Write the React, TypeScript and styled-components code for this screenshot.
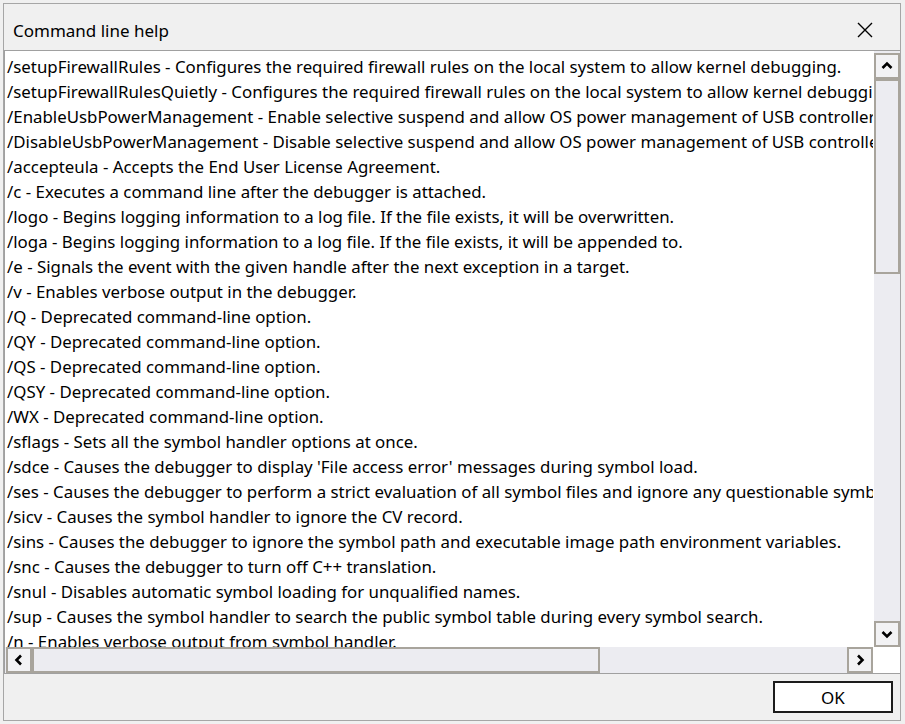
import React from 'react'
import styled, { createGlobalStyle } from 'styled-components'

const GlobalStyle = createGlobalStyle`
  html, body {
    margin: 0;
    padding: 0;
    background: #f0f0f0;
  }
  body {
    font-family: 'Noto Sans', 'Open Sans', sans-serif;
    color: #000;
  }
`

const lines = [
  '/setupFirewallRules - Configures the required firewall rules on the local system to allow kernel debugging.',
  '/setupFirewallRulesQuietly - Configures the required firewall rules on the local system to allow kernel debugging without prompting.',
  '/EnableUsbPowerManagement - Enable selective suspend and allow OS power management of USB controllers.',
  '/DisableUsbPowerManagement - Disable selective suspend and allow OS power management of USB controllers.',
  '/accepteula - Accepts the End User License Agreement.',
  '/c - Executes a command line after the debugger is attached.',
  '/logo - Begins logging information to a log file. If the file exists, it will be overwritten.',
  '/loga - Begins logging information to a log file. If the file exists, it will be appended to.',
  '/e - Signals the event with the given handle after the next exception in a target.',
  '/v - Enables verbose output in the debugger.',
  '/Q - Deprecated command-line option.',
  '/QY - Deprecated command-line option.',
  '/QS - Deprecated command-line option.',
  '/QSY - Deprecated command-line option.',
  '/WX - Deprecated command-line option.',
  '/sflags - Sets all the symbol handler options at once.',
  "/sdce - Causes the debugger to display 'File access error' messages during symbol load.",
  '/ses - Causes the debugger to perform a strict evaluation of all symbol files and ignore any questionable symbols.',
  '/sicv - Causes the symbol handler to ignore the CV record.',
  '/sins - Causes the debugger to ignore the symbol path and executable image path environment variables.',
  '/snc - Causes the debugger to turn off C++ translation.',
  '/snul - Disables automatic symbol loading for unqualified names.',
  '/sup - Causes the symbol handler to search the public symbol table during every symbol search.',
  '/n - Enables verbose output from symbol handler.',
]

const SWindow = styled.div`
  box-sizing: border-box;
  margin: 3px;
  width: 898px;
  height: 718px;
  border: 1px solid #a6a6a6;
  background: #f0f0f0;
  display: flex;
  flex-direction: column;
`

const STitleBar = styled.div`
  box-sizing: border-box;
  height: 46px;
  flex: none;
  display: flex;
  align-items: center;
  justify-content: space-between;
  padding: 6px 27px 0 9px;
`

const STitle = styled.div`
  font-size: 17px;
`

const SClose = styled.div`
  width: 16px;
  height: 16px;
  display: flex;
`

const SListBox = styled.div`
  box-sizing: border-box;
  height: 624px;
  flex: none;
  border: 1px solid #a0a0a0;
  border-right: none;
  background: #fff;
  display: grid;
  grid-template-columns: 1fr 26px;
  grid-template-rows: 1fr 26px;
  column-gap: 1px;
`

const SLines = styled.div`
  overflow: hidden;
  padding: 3px 0 0 2px;
`

const SLine = styled.div`
  height: 25px;
  line-height: 25px;
  font-size: 16.85px;
  white-space: nowrap;
`

const SVScroll = styled.div`
  display: flex;
  flex-direction: column;
  background: #ececf1;
  padding-top: 2px;
`

const SHScroll = styled.div`
  display: flex;
  background: #ececf1;
  padding-left: 1px;
`

const SArrow = styled.div`
  box-sizing: border-box;
  width: 26px;
  height: 26px;
  flex: none;
  border: 2px solid #a8a49c;
  background: #f2f2f4;
  display: flex;
  align-items: center;
  justify-content: center;
`

const SThumb = styled.div<{ $vertical?: boolean; $size: number }>`
  box-sizing: border-box;
  flex: none;
  border: 2px solid #a8a49c;
  background: #ececf1;
  width: ${(p) => (p.$vertical ? '26px' : `${p.$size}px`)};
  height: ${(p) => (p.$vertical ? `${p.$size}px` : '26px')};
`

const STrack = styled.div`
  flex: 1;
`

const SCorner = styled.div`
  background: #fff;
`

const SFooter = styled.div`
  flex: 1;
  display: flex;
  align-items: center;
  justify-content: flex-end;
  padding-right: 7px;
`

const SOkButton = styled.button`
  box-sizing: border-box;
  width: 120px;
  height: 32px;
  border: 2px solid #1c1c1c;
  background: #fff;
  font-family: inherit;
  font-size: 17px;
  color: #000;
  padding: 0;
`

const Chevron: React.FC<{ dir: 'up' | 'down' | 'left' | 'right' }> = ({ dir }) => {
  const rot = { up: 0, right: 90, down: 180, left: 270 }[dir]
  return (
    <svg width="12" height="12" viewBox="0 0 12 12">
      <polyline
        points="1.5,8 6,3.5 10.5,8"
        fill="none"
        stroke="#000"
        strokeWidth="2.6"
        transform={`rotate(${rot} 6 6)`}
      />
    </svg>
  )
}

const App: React.FC = () => {
  return (
    <>
      <GlobalStyle />
      <SWindow>
        <STitleBar>
          <STitle>Command line help</STitle>
          <SClose>
            <svg width="16" height="16" viewBox="0 0 16 16">
              <path d="M1 1 L15 15 M15 1 L1 15" stroke="#000" strokeWidth="1.4" />
            </svg>
          </SClose>
        </STitleBar>
        <SListBox>
          <SLines>
            {lines.map((l) => (
              <SLine key={l}>{l}</SLine>
            ))}
          </SLines>
          <SVScroll>
            <SArrow><Chevron dir="up" /></SArrow>
            <SThumb $vertical $size={195} />
            <STrack />
            <SArrow><Chevron dir="down" /></SArrow>
          </SVScroll>
          <SHScroll>
            <SArrow><Chevron dir="left" /></SArrow>
            <SThumb $size={568} />
            <STrack />
            <SArrow><Chevron dir="right" /></SArrow>
          </SHScroll>
          <SCorner />
        </SListBox>
        <SFooter>
          <SOkButton>OK</SOkButton>
        </SFooter>
      </SWindow>
    </>
  )
}

export default App
